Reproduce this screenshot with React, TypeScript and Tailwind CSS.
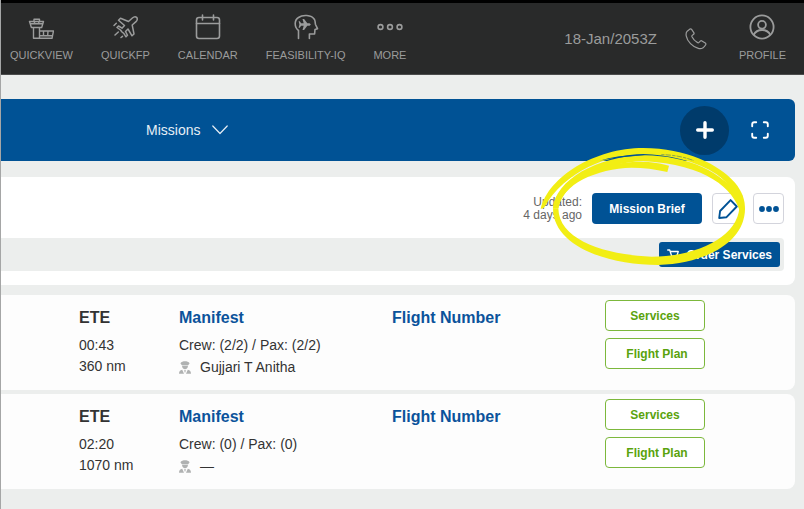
import React from "react";

type IconProps = { className?: string };

function TowerIcon() {
  return (
    <svg width="26" height="26" viewBox="0 0 26 26" fill="none" stroke="currentColor" strokeWidth="1.4" strokeLinejoin="round" strokeLinecap="round">
      <path d="M6 7.500V5.300h5.500v2.200M1.500 7.500h14l-1.800 6H3.400zM2.200 9.700h12.600M6.500 7.500v2.200M10.800 7.500v2.200M5.500 13.500v10.800M11.500 13.500v10.800M5.500 24.300h18.500l1.500-7.300h-14M11.500 21.700h13M15.500 17v4.500M20 17l-.3 4.500" />
    </svg>
  );
}

function PlaneIcon() {
  return (
    <svg width="26" height="26" viewBox="0 0 26 26" fill="none" stroke="currentColor" strokeWidth="1.5" strokeLinejoin="round" strokeLinecap="round">
      <path d="M24.600 3.400C23.400 2.200 21.500 3 20.400 4L16.500 7.500 8.500 4.200 6.500 6.200 12.500 11.500 10 14.200 6.500 12 5 13.500 8.500 16 10 18 11.800 19.300 14 22.800 15.500 21.300 13.500 17.500 16 15 20 21.800 22 20 20.200 11 24 7.600C25.200 6.500 25.800 4.600 24.600 3.400z" />
      <path d="M4.300 9.300 2 11.500M6.300 18 3 21M10.500 22.300l-1.500 1.200" />
    </svg>
  );
}

function CalendarIcon() {
  return (
    <svg width="26" height="26" viewBox="0 0 26 26" fill="none" stroke="currentColor" strokeWidth="1.600" strokeLinecap="round">
      <rect x="1.500" y="3.500" width="23" height="21" rx="2.500" />
      <path d="M1.500 9.500h23M7.500 1v5M18.500 1v5" />
    </svg>
  );
}

function HeadIcon() {
  return (
    <svg width="26" height="26" viewBox="0 0 26 26" fill="none" stroke="currentColor" strokeWidth="1.600" strokeLinejoin="round" strokeLinecap="round">
      <path d="M5.500 24.500v-8C1 13 1.200 6 5.500 3.500c4-3 13-3 16 2 1 2 .6 4 1 5l2 4.200-2.500.8-.4 4.500h-5.200v4.500" />
      <path
        d="M5.600 7.200h1.200l1.300 2h2.600L9.500 5h1.600l3.200 4.200h2.200q1.300.8 1.300 1.300t-1.300 1.300h-2.200L11.100 16H9.500l1.200-4.200H8.100l-1.300 2H5.600l.8-3.300z"
        fill="currentColor"
        stroke="none"
      />
    </svg>
  );
}

function MoreIcon() {
  return (
    <svg width="26" height="26" viewBox="0 0 26 26" fill="none" stroke="currentColor" strokeWidth="1.600">
      <circle cx="3.500" cy="13" r="2.400" />
      <circle cx="13" cy="13" r="2.400" />
      <circle cx="22.500" cy="13" r="2.400" />
    </svg>
  );
}

function ProfileIcon() {
  return (
    <svg width="26" height="26" viewBox="0 0 26 26" fill="none" stroke="currentColor" strokeWidth="1.800">
      <circle cx="13" cy="13" r="11.600" />
      <circle cx="13" cy="10.800" r="3.900" />
      <path d="M4.600 21c2-4 4.800-5 8.400-5s6.400 1 8.400 5" />
    </svg>
  );
}

function PhoneIcon() {
  return (
    <svg width="22" height="22" viewBox="0 0 22 22" fill="none" stroke="currentColor" strokeWidth="1.200" strokeLinejoin="round">
      <path d="M2.200 3.200 5 1c.6-.4 1.200-.2 1.600.4l2.200 3.200c.4.600.3 1.200-.2 1.600L7.200 7.400c-.4.400-.4.900-.2 1.400 1 2.300 3.200 4.500 5.600 5.800.5.300 1 .2 1.400-.2l1.300-1.300c.5-.5 1-.6 1.600-.2l3.400 2.200c.6.400.8 1 .4 1.600-1.600 2.800-4.200 4.600-7.400 3.700C7.500 18.800 2.300 13.500 1.200 7.800.9 5.900.9 4.500 2.200 3.200z" />
    </svg>
  );
}

function ChevronIcon() {
  return (
    <svg className="pointer-events-none" width="16" height="10" viewBox="0 0 16 10" fill="none" stroke="currentColor" strokeWidth="1.200" strokeLinecap="round" strokeLinejoin="round">
      <path d="m.8 1 7.200 7.500L15.200 1" />
    </svg>
  );
}

function PlusIcon() {
  return (
    <svg width="18" height="18" viewBox="0 0 18 18" fill="none" stroke="currentColor" strokeWidth="3.400" strokeLinecap="round">
      <path d="M9 1.700v14.600M1.700 9h14.600" />
    </svg>
  );
}

function ExpandIcon() {
  return (
    <svg width="18" height="18" viewBox="0 0 18 18" fill="none" stroke="currentColor" strokeWidth="1.900" strokeLinecap="round">
      <path d="M1.200 5.200V3.200q0-2 2-2h2M12.800 1.200h2q2 0 2 2v2M16.800 12.800v2q0 2-2 2h-2M5.200 16.800h-2q-2 0-2-2v-2" />
    </svg>
  );
}

function PencilIcon() {
  return (
    <svg width="20" height="20" viewBox="0 0 20 20" fill="none" stroke="currentColor" strokeWidth="1.900" strokeLinejoin="round">
      <path d="M12.600 1.100 18.800 7.500 8.300 18.300 1.200 19l.9-7z" />
    </svg>
  );
}

function DotsIcon() {
  return (
    <svg width="20" height="6" viewBox="0 0 20 6" fill="currentColor">
      <circle cx="3" cy="3" r="2.900" />
      <circle cx="10" cy="3" r="2.900" />
      <circle cx="17" cy="3" r="2.900" />
    </svg>
  );
}

function CartIcon() {
  return (
    <svg width="12" height="12" viewBox="0 0 12 12" fill="none" stroke="currentColor" strokeWidth="1.300" strokeLinejoin="round" strokeLinecap="round">
      <path d="M.7 1h2l2 6.200h5L11.300 2.500H3.300M4.700 7.200 4 9h6" />
      <circle cx="4.500" cy="10.800" r=".6" />
      <circle cx="9.500" cy="10.800" r=".6" />
    </svg>
  );
}

function PilotIcon({ className }: IconProps) {
  return (
    <svg className={className} width="12" height="13" viewBox="0 0 12 13" fill="#b0b2b2">
      <path d="M1.400 2.200C2.300.8 4.300.2 6 .2s3.700.6 4.600 2L9.200 4.200H2.800z" />
      <path d="M3 4.700h6C8.900 6.900 7.700 8.200 6 8.200S3.100 6.900 3 4.700z" />
      <path d="M0 12.800c0-2.400 1-3.500 3.200-4L5 12.800zM12 12.800c0-2.400-1-3.500-3.200-4L7 12.800zM5 9.200h2L6 12z" />
    </svg>
  );
}

function Highlight() {
  return (
    <svg className="pointer-events-none absolute -top-[37px] right-[45px] z-10" width="220" height="130" viewBox="90 0 660 390" fill="#f2ee14" aria-hidden="true">
      <path d="M122 207C145 110 285 24 430 24C560 25 655 72 705 128C727 155 736 180 735 210L718 210C714 172 690 132 650 103C590 62 500 43 430 42C325 43 195 92 132 203Z" />
      <path d="M159 205C165 122 290 48 435 46C560 48 670 92 728 185L722 220C700 145 620 74 430 63C310 70 190 122 175 205Z" />
      <path d="M159 205C166 122 300 66 420 65C455 65 485 70 507 77L502 96C465 87 430 83 395 83C290 86 185 132 175 205Z" />
      <path d="M159 205C159 320 325 375 475 375C620 370 737 305 735 203L718 203C713 290 590 350 455 350C315 345 176 300 175 205Z" />
      <path d="M484 44C515 44 550 50 582 62" fill="none" stroke="#55806a" strokeWidth="2" strokeDasharray="10 3 16 4" />
      <path d="M298 62C340 49 385 44 432 46C385 49 340 54 298 62Z" fill="#005295" />
    </svg>
  );
}

const navItems = [
  { label: "QUICKVIEW", Icon: TowerIcon },
  { label: "QUICKFP", Icon: PlaneIcon },
  { label: "CALENDAR", Icon: CalendarIcon },
  { label: "FEASIBILITY-IQ", Icon: HeadIcon },
  { label: "MORE", Icon: MoreIcon },
];

const legs = [
  { time: "00:43", distance: "360 nm", crew: "Crew: (2/2) / Pax: (2/2)", pilot: "Gujjari T Anitha" },
  { time: "02:20", distance: "1070 nm", crew: "Crew: (0) / Pax: (0)", pilot: "—" },
];

function NavButton({ label, Icon }: { label: string; Icon: () => React.JSX.Element }) {
  return (
    <button type="button" className="flex flex-col items-center gap-[7px] text-[11px] leading-4">
      <Icon />
      <span>{label}</span>
    </button>
  );
}

function LegCard({ leg }: { leg: (typeof legs)[number] }) {
  return (
    <article className="grid grid-cols-[100px_213px_1fr_100px] rounded-r-lg bg-[#fdfdfd] pt-[5px] pr-[90px] pb-3 pl-[78px] text-sm leading-[21px] text-[#333]">
      <div className="pt-[6px]">
        <h2 className="mb-[5px] text-base leading-6 font-bold">ETE</h2>
        <p>{leg.time}</p>
        <p>{leg.distance}</p>
      </div>
      <div className="pt-[6px]">
        <h2 className="mb-[5px] text-base leading-6 font-bold text-[#0b539b]">
          <a href="#manifest">Manifest</a>
        </h2>
        <p>{leg.crew}</p>
        <p className="flex items-center gap-[9px] pt-px">
          <PilotIcon />
          <span>{leg.pilot}</span>
        </p>
      </div>
      <div className="pt-[6px]">
        <h2 className="text-base leading-6 font-bold text-[#0b539b]">
          <a href="#flight-number">Flight Number</a>
        </h2>
      </div>
      <div className="flex flex-col gap-[7px] text-xs font-bold text-[#5aa30d]">
        <button type="button" className="h-[31px] rounded border border-[#7cb83c] bg-white">Services</button>
        <button type="button" className="h-[31px] rounded border border-[#7cb83c] bg-white pl-1">Flight Plan</button>
      </div>
    </article>
  );
}

export default function App() {
  return (
    <div className="min-h-screen overflow-x-hidden border-l border-[#a5a6a6] bg-[#eceeed] font-['Liberation_Sans',Arial,sans-serif]">
      <header className="-ml-px flex h-[75px] items-start justify-between border-t-3 border-b border-t-black border-b-[#4b4c4c] bg-[#292a2a] pt-[11px] pr-[18px] pl-[10px] text-[#9b9c9c]">
        <nav className="flex gap-7">
          {navItems.map((item) => (
            <NavButton key={item.label} label={item.label} Icon={item.Icon} />
          ))}
        </nav>
        <div className="flex items-start">
          <time className="mt-[15px] mr-7 text-[15px] leading-5">18-Jan/2053Z</time>
          <button type="button" aria-label="Call" className="mt-[14px] mr-8">
            <PhoneIcon />
          </button>
          <NavButton label="PROFILE" Icon={ProfileIcon} />
        </div>
      </header>

      <main className="pt-6 pr-[9px]">
        <div className="flex h-[62px] items-center justify-between rounded-r-md bg-[#005295] pr-[26px] pl-[145px] text-white">
          <label className="flex items-center gap-[11px] text-[#e6eef5]">
            <select aria-label="View" className="appearance-none bg-transparent text-sm leading-5">
              <option>Missions</option>
            </select>
            <ChevronIcon />
          </label>
          <div className="flex items-center gap-[22px]">
            <button type="button" aria-label="Add mission" className="flex size-[49px] items-center justify-center rounded-full bg-[#003b6b]">
              <PlusIcon />
            </button>
            <button type="button" aria-label="Full screen">
              <ExpandIcon />
            </button>
          </div>
        </div>

        <section className="relative mt-4 rounded-r-lg bg-white pt-4 pb-[14px]">
          <div className="flex items-center justify-end gap-[10px] pr-[11px] text-[#005295]">
            <p className="text-right text-xs leading-[13px] text-[#666]">
              Updated:
              <br />4 days ago
            </p>
            <button type="button" className="h-[31px] w-[110px] rounded bg-[#005295] text-xs font-bold text-white">Mission Brief</button>
            <button type="button" aria-label="Edit" className="flex size-[31px] items-center justify-center rounded border border-[#d3d4dc] bg-white">
              <PencilIcon />
            </button>
            <button type="button" aria-label="More actions" className="flex size-[31px] items-center justify-center rounded border border-[#d3d4dc] bg-white">
              <DotsIcon />
            </button>
          </div>
          <div className="mt-[14px] mr-[11px] flex justify-end rounded-r bg-[#eceeed] py-1 pr-1">
            <button type="button" className="flex h-[25px] items-center gap-2 rounded-[3px] bg-[#005295] px-2 text-xs font-bold text-white">
              <CartIcon />
              Order Services
            </button>
          </div>
          <Highlight />
        </section>

        <div className="mt-[10px] flex flex-col gap-1">
          {legs.map((leg) => (
            <LegCard key={leg.time} leg={leg} />
          ))}
        </div>
      </main>
    </div>
  );
}
